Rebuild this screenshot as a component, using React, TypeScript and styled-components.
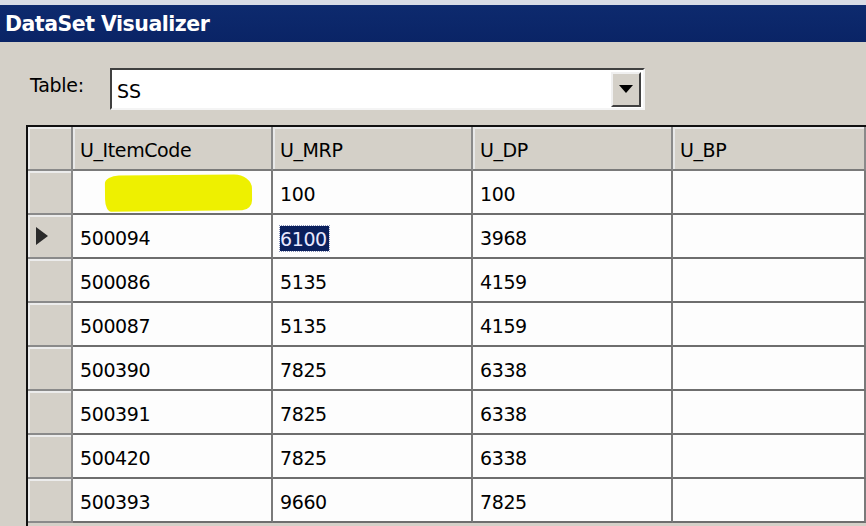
import React from "react";
import styled, { createGlobalStyle } from "styled-components";

const Global = createGlobalStyle`
  html, body { margin: 0; padding: 0; }
  body {
    background: #d4d0c8;
    font-family: "DejaVu Sans", Tahoma, sans-serif;
    overflow: hidden;
  }
`;

const Window = styled.div`
  width: 866px;
  height: 526px;
  background: #d4d0c8;
  display: flex;
  flex-direction: column;
  overflow: hidden;
`;

const TitleBar = styled.div`
  height: 37px;
  border-top: 5px solid #d8dce6;
  background: linear-gradient(#0d2a6e, #0a2466);
  color: #fff;
  font-weight: bold;
  font-size: 20.5px;
  letter-spacing: -0.5px;
  display: flex;
  align-items: center;
  padding-left: 5px;
  flex-shrink: 0;
`;

const ToolRow = styled.div`
  height: 83px;
  display: flex;
  align-items: flex-start;
  padding-left: 30px;
  padding-top: 26px;
  box-sizing: border-box;
  flex-shrink: 0;
`;

const Label = styled.div`
  font-size: 19px;
  color: #000;
  width: 80px;
  margin-top: 6px;
  letter-spacing: -0.3px;
`;

const Combo = styled.div`
  width: 535px;
  height: 42px;
  box-sizing: border-box;
  background: #fff;
  border-top: 2px solid #404040;
  border-left: 2px solid #404040;
  border-right: 2px solid #f4f4f4;
  border-bottom: 2px solid #f4f4f4;
  display: flex;
  align-items: center;
  justify-content: space-between;
  padding: 0 2px 0 5px;
`;

const ComboText = styled.span`
  font-size: 19px;
  color: #000;
  margin-top: 4px;
`;

const DropButton = styled.div`
  width: 30px;
  height: 35px;
  box-sizing: border-box;
  background: #d4d0c8;
  border-top: 2px solid #f0f0f0;
  border-left: 2px solid #f0f0f0;
  border-right: 2px solid #404040;
  border-bottom: 2px solid #404040;
  display: flex;
  align-items: center;
  justify-content: center;
`;

const Grid = styled.div`
  margin-left: 26px;
  border-top: 2px solid #111;
  border-left: 2px solid #111;
  background: #d4d0c8;
  display: flex;
  flex-direction: column;
  flex: 1;
`;

const Row = styled.div`
  display: grid;
  grid-template-columns: 45px 200px 200px 200px 1fr;
  height: 44px;
  flex-shrink: 0;
`;

const RowHead = styled.div`
  background: #d4d0c8;
  border-right: 2px solid #8a8a8a;
  border-bottom: 2px solid #8a8a8a;
  box-shadow: inset 2px 2px 0 #ececec;
  display: flex;
  align-items: center;
  padding-left: 8px;
`;

const HeadCell = styled.div`
  background: #d4d0c8;
  border-right: 2px solid #8a8a8a;
  border-bottom: 2px solid #7a7a7a;
  box-shadow: inset 2px 2px 0 #e8e8e8;
  display: flex;
  align-items: center;
  padding-left: 7px;
  padding-top: 3px;
  font-size: 19px;
  letter-spacing: -0.4px;
  color: #000;
  white-space: nowrap;
  overflow: hidden;
`;

const Cell = styled.div`
  position: relative;
  background: #fdfdfd;
  border-right: 2px solid #7a7a7a;
  border-bottom: 2px solid #6e6e6e;
  display: flex;
  align-items: center;
  padding-left: 7px;
  padding-top: 4px;
  font-size: 19px;
  letter-spacing: -0.4px;
  color: #000;
  white-space: nowrap;
  overflow: hidden;
`;

const Selected = styled.span`
  background: #0a1f5c;
  color: #e8e8ff;
  padding: 2px 2px 1px 0;
  outline: 1px dotted #8a93b8;
`;

const Highlight = styled.div`
  position: absolute;
  left: 32px;
  top: 4px;
  width: 147px;
  height: 36px;
  background: #eef000;
  border-radius: 14px 18px 10px 6px / 8px 14px 10px 12px;
  transform: rotate(-0.6deg);
`;

const columns = ["U_ItemCode", "U_MRP", "U_DP", "U_BP"];

const rows: string[][] = [
  ["", "100", "100", ""],
  ["500094", "6100", "3968", ""],
  ["500086", "5135", "4159", ""],
  ["500087", "5135", "4159", ""],
  ["500390", "7825", "6338", ""],
  ["500391", "7825", "6338", ""],
  ["500420", "7825", "6338", ""],
  ["500393", "9660", "7825", ""],
];

export default function App() {
  return (
    <Window>
      <Global />
      <TitleBar>DataSet Visualizer</TitleBar>
      <ToolRow>
        <Label>Table:</Label>
        <Combo>
          <ComboText>SS</ComboText>
          <DropButton>
            <svg width="14" height="8" viewBox="0 0 14 8">
              <polygon points="0,0 14,0 7,8" fill="#000" />
            </svg>
          </DropButton>
        </Combo>
      </ToolRow>
      <Grid>
        <Row>
          <RowHead />
          {columns.map((c) => (
            <HeadCell key={c}>{c}</HeadCell>
          ))}
        </Row>
        {rows.map((r, i) => (
          <Row key={i}>
            <RowHead>
              {i === 1 && (
                <svg width="12" height="18" viewBox="0 0 12 18">
                  <polygon points="0,0 12,9 0,18" fill="#2a2a2a" />
                </svg>
              )}
            </RowHead>
            {r.map((v, j) => (
              <Cell key={j}>
                {i === 0 && j === 0 && <Highlight />}
                {i === 1 && j === 1 ? <Selected>{v}</Selected> : v}
              </Cell>
            ))}
          </Row>
        ))}
      </Grid>
    </Window>
  );
}
